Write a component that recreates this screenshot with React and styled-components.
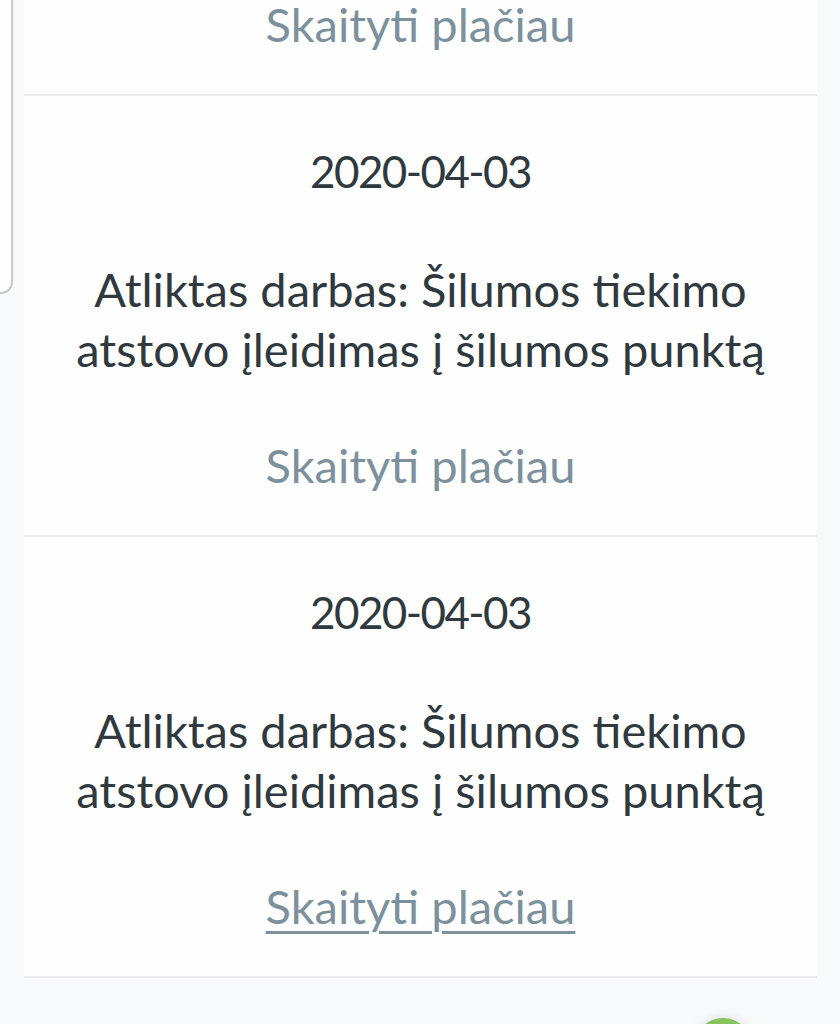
import React from 'react';
import styled, { createGlobalStyle } from 'styled-components';

const GlobalStyle = createGlobalStyle`
  html, body {
    margin: 0;
    padding: 0;
    background: #f8f9fb;
    overflow: hidden;
  }
  body {
    font-family: 'Lato', 'Noto Sans', sans-serif;
  }
`;

const items = [
  { id: 1, date: '2020-04-03', title: 'Atliktas darbas: Šilumos tiekimo atstovo įleidimas į šilumos punktą' },
  { id: 2, date: '2020-04-03', title: 'Atliktas darbas: Šilumos tiekimo atstovo įleidimas į šilumos punktą' },
];

const Page = styled.div`
  position: relative;
  width: 840px;
  height: 1024px;
  overflow: hidden;
  background: #f8f9fb;
`;

const Column = styled.div`
  width: 793px;
  margin-left: 24px;
  margin-top: -345px;
  background: #fefefe;
`;

const Card = styled.article`
  display: flex;
  flex-direction: column;
  align-items: center;
  padding: 50px 0 45px;
  border-bottom: 2px solid #ececec;
`;

const Date = styled.div`
  font-size: 44px;
  line-height: 50px;
  letter-spacing: -1.6px;
  color: #30393e;
`;

const Title = styled.h3`
  margin: 63px 0 0;
  font-weight: 400;
  font-size: 47px;
  line-height: 60px;
  color: #30393e;
  text-align: center;
  width: 730px;
`;

const More = styled.a`
  margin-top: 61px;
  font-size: 47px;
  line-height: 50px;
  color: #7d919c;
  text-decoration: ${(p) => (p.active ? 'underline' : 'none')};
  text-decoration-thickness: 3px;
  text-underline-offset: 7px;
  cursor: pointer;
`;

const SidePanel = styled.div`
  position: absolute;
  left: -20px;
  top: -20px;
  width: 29px;
  height: 310px;
  background: #fefefe;
  border: 2px solid #c9c9c9;
  border-radius: 12px;
`;

const ChatButton = styled.div`
  position: absolute;
  left: 694px;
  top: 1018px;
  width: 58px;
  height: 58px;
  border-radius: 50%;
  background: #86c45e;
  box-shadow: 0 0 12px rgba(0, 0, 0, 0.1);
`;

export default function App() {
  return (
    <Page>
      <GlobalStyle />
      <Column>
        <Card>
          <Date>2020-04-03</Date>
          <Title>Atliktas darbas: Šilumos tiekimo atstovo įleidimas į šilumos punktą</Title>
          <More>Skaityti plačiau</More>
        </Card>
        {items.map((it, i) => (
          <Card key={it.id}>
            <Date>{it.date}</Date>
            <Title>{it.title}</Title>
            <More active={i === items.length - 1}>Skaityti plačiau</More>
          </Card>
        ))}
      </Column>
      <SidePanel />
      <ChatButton />
    </Page>
  );
}
